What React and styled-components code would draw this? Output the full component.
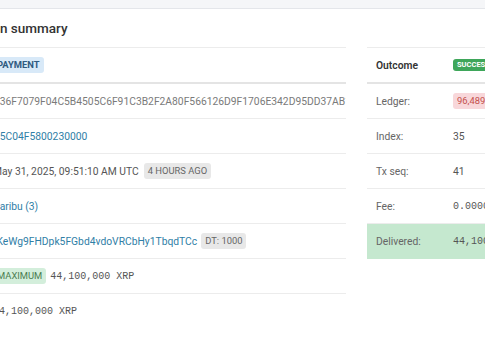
import React from "react";
import styled, { createGlobalStyle } from "styled-components";

const Global = createGlobalStyle`
  html, body { margin: 0; padding: 0; background: #fff; overflow: hidden; }
  body { font-family: Roboto, "Noto Sans", Arial, sans-serif; color: #444; }
`;

const TopBar = styled.div`
  height: 8px;
  background: #f5f6f8;
  border-bottom: 1px solid #e4e6ea;
`;

const Heading = styled.h2`
  margin: 0;
  height: 38px;
  display: flex;
  align-items: center;
  font-size: 13.5px;
  font-weight: 500;
  color: #333;
  white-space: nowrap;
`;

const Columns = styled.div`
  display: flex;
  gap: 21px;
  align-items: flex-start;
`;

const LeftTable = styled.div`
  width: 346px;
  flex: none;
  border-top: 1px solid #ececec;
`;

const RightTable = styled.div`
  flex: none;
  width: 200px;
  border-top: 1px solid #ececec;
`;

const Row = styled.div`
  height: 34px;
  display: flex;
  align-items: center;
  border-bottom: ${(p) => (p.$head ? "2px solid #e4e4e4" : "1px solid #ececec")};
  background: ${(p) => (p.$tone === "good" ? "#c5e8cf" : "transparent")};
  ${(p) => (p.$tone === "good" || p.$last) && "border-bottom-color: transparent;"}
  overflow: hidden;
`;

const Value = styled.div`
  margin-left: -7px;
  display: flex;
  align-items: center;
  gap: ${(p) => p.$gap || 5}px;
  white-space: nowrap;
  font-size: 10.3px;
  color: ${(p) => (p.$muted ? "#7a7a7a" : "#555")};
`;

const Link = styled.span`
  color: #2f7ea6;
`;

const Badge = styled.span`
  display: inline-block;
  font-size: ${(p) => (p.$small ? "7.5px" : "9.4px")};
  line-height: ${(p) => (p.$small ? "12px" : "16px")};
  padding: 0 4px;
  border-radius: 3px;
  font-weight: ${(p) => (p.$bold ? 700 : 400)};
  text-transform: uppercase;
  background: ${(p) =>
    ({
      blue: "#d8e9f8",
      gray: "#e8e8e8",
      green: "#d3eedb",
      success: "#3ea65a",
      red: "#f8d7da",
    }[p.$tone])};
  color: ${(p) =>
    ({
      blue: "#2f5a80",
      gray: "#666",
      green: "#4b7d50",
      success: "#fff",
      red: "#c4504c",
    }[p.$tone])};
`;

const Mono = styled.span`
  font-family: "Liberation Mono", "DejaVu Sans Mono", monospace;
  font-size: 10px;
  color: #555;
`;

const Label = styled.div`
  width: 77px;
  flex: none;
  padding-left: 9px;
  font-size: 10.3px;
  color: ${(p) => (p.$head ? "#333" : "#666")};
  font-weight: ${(p) => (p.$head ? 600 : 400)};
  white-space: nowrap;
`;

const Cell = styled.div`
  font-size: 10.3px;
  color: #555;
  white-space: nowrap;
  display: flex;
  align-items: center;
`;

export default function App() {
  return (
    <>
      <Global />
      <TopBar />
      <Heading>n summary</Heading>
      <Columns>
        <LeftTable>
          <Row $head>
            <Value>
              <Badge $tone="blue" $bold>Payment</Badge>
            </Value>
          </Row>
          <Row>
            <Value $muted>
              C36F7079F04C5B4505C6F91C3B2F2A80F566126D9F1706E342D95DD37AB1C2
            </Value>
          </Row>
          <Row>
            <Value>
              <Link>C5C04F5800230000</Link>
            </Value>
          </Row>
          <Row>
            <Value>
              May 31, 2025, 09:51:10 AM UTC
              <Badge $tone="gray">4 hours ago</Badge>
            </Value>
          </Row>
          <Row>
            <Value>
              <Link>Caribu (3)</Link>
            </Value>
          </Row>
          <Row>
            <Value $gap={4}>
              <Link>rKeWg9FHDpk5FGbd4vdoVRCbHy1TbqdTCc</Link>
              <Badge $tone="gray">DT: 1000</Badge>
            </Value>
          </Row>
          <Row>
            <Value $gap={4}>
              <Badge $tone="green">Maximum</Badge>
              <Mono>44,100,000 XRP</Mono>
            </Value>
          </Row>
          <Row $last>
            <Value>
              <Mono>44,100,000 XRP</Mono>
            </Value>
          </Row>
        </LeftTable>
        <RightTable>
          <Row $head>
            <Label $head>Outcome</Label>
            <Cell>
              <Badge $tone="success" $small $bold>Success</Badge>
            </Cell>
          </Row>
          <Row>
            <Label>Ledger:</Label>
            <Cell>
              <Badge $tone="red">96,489,347</Badge>
            </Cell>
          </Row>
          <Row>
            <Label>Index:</Label>
            <Cell>35</Cell>
          </Row>
          <Row>
            <Label>Tx seq:</Label>
            <Cell>41</Cell>
          </Row>
          <Row>
            <Label>Fee:</Label>
            <Cell>
              <Mono>0.000012 XRP</Mono>
            </Cell>
          </Row>
          <Row $tone="good">
            <Label>Delivered:</Label>
            <Cell>
              <Mono>44,100,000 XRP</Mono>
            </Cell>
          </Row>
        </RightTable>
      </Columns>
    </>
  );
}
